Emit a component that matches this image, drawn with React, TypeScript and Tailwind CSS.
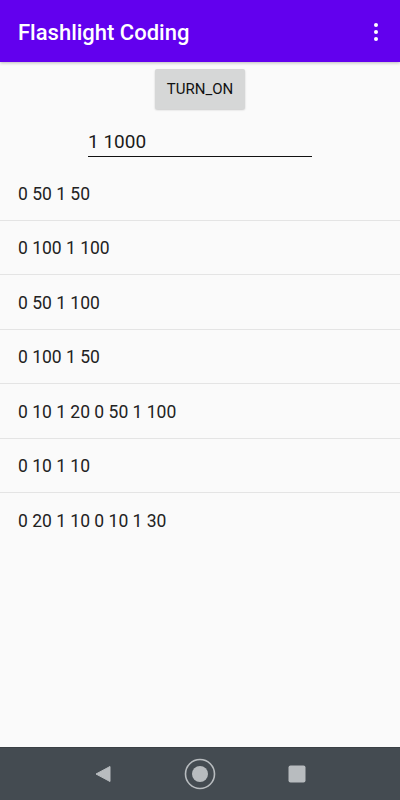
import React from "react";

const rows = [
  "0 50 1 50",
  "0 100 1 100",
  "0 50 1 100",
  "0 100 1 50",
  "0 10 1 20 0 50 1 100",
  "0 10 1 10",
  "0 20 1 10 0 10 1 30",
];

export default function App() {
  return (
    <div
      className="flex h-[800px] w-[400px] flex-col bg-[#fafafa]"
      style={{ fontFamily: "Roboto, 'Noto Sans', sans-serif" }}
    >
      {/* toolbar */}
      <div className="relative z-10 flex h-[62px] shrink-0 items-center justify-between bg-[#6200ee] pl-[18px] pr-[22px] pt-[2px] shadow-[0_1px_3px_rgba(0,0,0,0.25)]">
        <h1 className="text-[22px] font-medium text-white">Flashlight Coding</h1>
        <div className="flex flex-col items-center gap-[3px]">
          <span className="h-[4px] w-[4px] rounded-full bg-white" />
          <span className="h-[4px] w-[4px] rounded-full bg-white" />
          <span className="h-[4px] w-[4px] rounded-full bg-white" />
        </div>
      </div>

      <main className="flex flex-1 flex-col">
        <div className="flex justify-center pt-[7px]">
          <button className="h-[40px] w-[90px] rounded-[2px] bg-[#d6d7d7] text-[15px] text-[#111] shadow-[0_1px_2px_rgba(0,0,0,0.2)]">
            TURN_ON
          </button>
        </div>

        <div className="mx-auto mt-[19px] w-[224px] border-b border-[#111]">
          <p className="text-[19px] leading-[28px] text-[#1a1a1a]">1 1000</p>
        </div>

        <ul className="mt-[9px]">
          {rows.map((r, i) => (
            <li
              key={i}
              className={
                "flex h-[54.5px] items-center px-[18px] pt-[2px] text-[17.5px] text-[#222] " +
                (i < rows.length - 1 ? "border-b border-[#e4e4e4]" : "")
              }
            >
              {r}
            </li>
          ))}
        </ul>
      </main>

      {/* navigation bar */}
      <div className="flex h-[53px] shrink-0 items-center justify-center gap-[72px] border-t border-[#3a4045] bg-[#444b51]">
        <svg width="18" height="18" viewBox="0 0 18 18">
          <path d="M16 1.5 L16 16.5 L2 9 Z" fill="#b8bcbf" strokeLinejoin="round" stroke="#b8bcbf" strokeWidth="1" />
        </svg>
        <svg width="32" height="32" viewBox="0 0 32 32">
          <circle cx="16" cy="16" r="14.5" fill="none" stroke="#b8bcbf" strokeWidth="1.6" />
          <circle cx="16" cy="16" r="8" fill="#b8bcbf" />
        </svg>
        <svg width="18" height="18" viewBox="0 0 18 18">
          <rect x="0.5" y="0.5" width="17" height="17" rx="2" fill="#b8bcbf" />
        </svg>
      </div>
    </div>
  );
}
